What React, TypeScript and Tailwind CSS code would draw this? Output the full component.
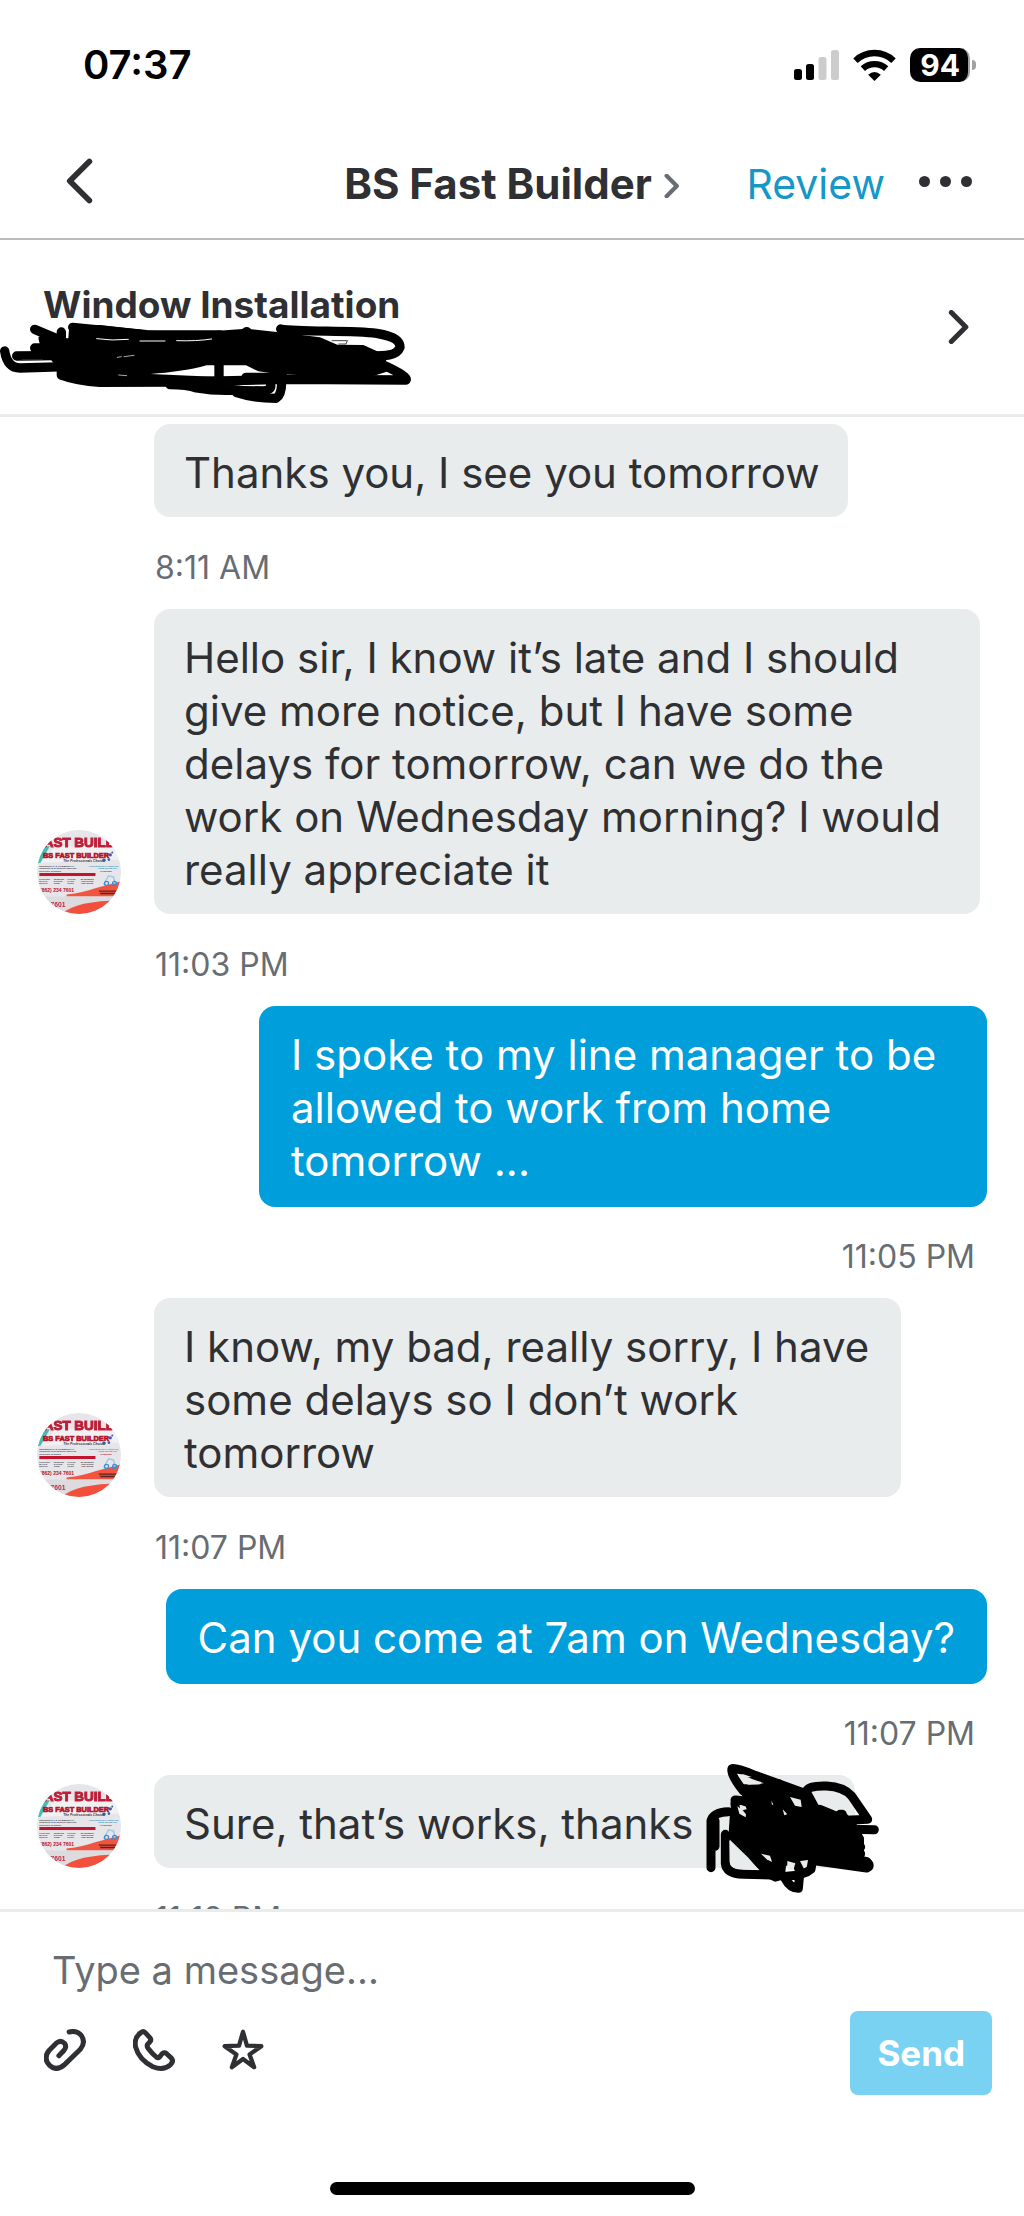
import { useState } from "react";
import { clsx } from "clsx";

interface Message {
  id: number;
  from: "pro" | "me";
  text: string;
  time: string;
  avatar?: boolean;
  redacted?: boolean;
  size?: string;
}

const messages: Message[] = [
  { id: 1, from: "pro", text: "Thanks you, I see you tomorrow", time: "8:11 AM", size: "min-w-[694px]" },
  {
    id: 2,
    from: "pro",
    text: "Hello sir, I know it’s late and I should give more notice, but I have some delays for tomorrow, can we do the work on Wednesday morning? I would really appreciate it",
    time: "11:03 PM",
    avatar: true,
    size: "max-w-[826px]",
  },
  {
    id: 3,
    from: "me",
    text: "I spoke to my line manager to be allowed to work from home tomorrow ...",
    time: "11:05 PM",
    size: "max-w-[728px]",
  },
  {
    id: 4,
    from: "pro",
    text: "I know, my bad, really sorry, I have some delays so I don’t work tomorrow",
    time: "11:07 PM",
    avatar: true,
    size: "max-w-[747px]",
  },
  { id: 5, from: "me", text: "Can you come at 7am on Wednesday?", time: "11:07 PM" },
  {
    id: 6,
    from: "pro",
    text: "Sure, that’s works, thanks",
    time: "11:12 PM",
    avatar: true,
    redacted: true,
    size: "min-w-[701px]",
  },
];

const SignalIcon = () => (
  <svg viewBox="0 0 45 30" className="w-[45px] h-[30px]" aria-hidden="true">
    <rect x="0" y="19" width="8" height="11" rx="2.5" />
    <rect x="12" y="14" width="8" height="16" rx="2.5" />
    <rect x="24.5" y="7" width="8" height="23" rx="2.5" fill="#cccccc" />
    <rect x="37" y="0" width="8" height="30" rx="2.5" fill="#cccccc" />
  </svg>
);

const WifiIcon = () => (
  <svg viewBox="0 0 128 96" className="w-[43px] h-[32px]" aria-hidden="true">
    <g fill="none" stroke="#000" strokeWidth="19">
      <path d="M7 35 A82 82 0 0 1 121 35" />
      <path d="M29 59 A52 52 0 0 1 99 59" />
    </g>
    <path d="M64 96 L45 77 Q64 61 83 77 Z" />
  </svg>
);

const BatteryIcon = () => (
  <span className="flex items-center gap-0.5">
    <span className="flex h-[34px] items-center rounded-[10px] border-r-2 border-neutral-400 bg-black pl-2.5 pr-2 text-[30px] font-bold leading-none text-white">
      94
    </span>
    <span className="h-2.5 w-1 rounded-r-full bg-neutral-400" />
  </span>
);

const Chevron = ({ className, flip }: { className: string; flip?: boolean }) => (
  <svg
    viewBox="0 0 24 40"
    className={className}
    fill="none"
    stroke="currentColor"
    strokeLinecap="round"
    strokeLinejoin="round"
    aria-hidden="true"
  >
    <path d={flip ? "M21 3 L4 20 L21 37" : "M3 3 L20 20 L3 37"} />
  </svg>
);

const ClipIcon = () => (
  <svg viewBox="45 58 127 127" className="size-[42px]" fill="none" stroke="currentColor" strokeWidth="15" strokeLinecap="round" strokeLinejoin="round" aria-hidden="true">
    <path d="M121 67 Q145 61 158 78 Q172 98 155 119 L108 165 Q83 188 62 168 Q41 147 61 122 L82 101 Q95 90 107 101 Q115 112 105 123 L90 139" />
  </svg>
);

const PhoneIcon = () => (
  <svg viewBox="312 58 127 127" className="size-[42px]" fill="none" stroke="currentColor" strokeWidth="15" strokeLinecap="round" strokeLinejoin="round" aria-hidden="true">
    <path d="M349 69 L363 84 Q369 91 362 98 L357 103 Q352 109 358 117 Q370 133 383 143 Q390 148 395 139 Q404 125 413 132 L428 146 Q436 155 425 166 Q405 185 372 172 Q330 151 320 113 Q314 84 336 69 Q343 63 349 69 Z" />
  </svg>
);

const StarIcon = () => (
  <svg viewBox="579 56 128 127" className="size-[42px]" fill="none" stroke="currentColor" strokeWidth="13" strokeLinejoin="round" aria-hidden="true">
    <path d="M643 64 L655 106 L699 108 L663 133 L677 172 L643 147 L609 172 L623 133 L587 108 L631 106 Z" />
  </svg>
);

const Avatar = () => (
  <svg viewBox="52 52 250 250" className="size-[84px] rounded-full" role="img" aria-label="BS Fast Builder">
    <defs>
      <filter id="soft">
        <feGaussianBlur stdDeviation="2" />
      </filter>
    </defs>
    <rect x="52" y="52" width="250" height="250" fill="#e6e6ea" />
    <path d="M52 150 L110 100 H300 V140 L180 145 Z" fill="#f1f1f3" />
    <path d="M52 100 H90 L62 150 H52 Z" fill="#45bdb4" />
    <g fontFamily="'Liberation Sans Narrow', 'Liberation Sans', sans-serif" fontWeight="700">
      <text x="72" y="103" fontSize="40" fill="#c01f38" stroke="#c01f38" strokeWidth="3" filter="url(#soft)">
        AST BUILD
      </text>
      <text x="70" y="134" fontSize="22" fill="#b5122b" stroke="#b5122b" strokeWidth="2">
        BS FAST BUILDER
      </text>
      <text x="130" y="148" fontSize="10" fontStyle="italic" fill="#333344">
        The Professionals Choice!
      </text>
      <g fontSize="7" fill="#3b3b44">
        <text x="59" y="161">RESIDENTIAL &amp; COMMERCIAL</text>
        <text x="59" y="169">INTERIOR &amp; EXTERIOR SERVICE</text>
        <text x="59" y="177">ROOFING &amp; SIDING</text>
        <text x="59" y="200">KITCHEN</text>
        <text x="59" y="207">BATHS</text>
        <text x="59" y="214">DECKS</text>
        <text x="102" y="200">WINDOW</text>
        <text x="102" y="207">DOORS</text>
        <text x="102" y="214">TRIM</text>
        <text x="142" y="200">FLOOR</text>
        <text x="142" y="207">PAINT</text>
        <text x="142" y="214">TILES</text>
        <text x="182" y="200">BASEMENT</text>
        <text x="182" y="207">ADDITIONS</text>
        <text x="182" y="214">AND MORE</text>
      </g>
      <g fontSize="7" fill="#2e8fbd">
        <text x="207" y="161">PROFESSIONAL SERVICE</text>
        <text x="234" y="169">FREE ESTIMATE</text>
      </g>
      <text x="240" y="177" fontSize="7" fill="#b5122b">LICENSED</text>
      <rect x="59" y="180" width="167" height="9" fill="#c3142d" />
      <path d="M140 244 Q190 238 225 225 L300 205 V250 H140 Z" fill="#f2553f" />
      <path d="M52 250 H302 V272 Q230 258 190 275 L160 302 H52 Z" fill="#dcdcdf" />
      <path d="M125 302 Q170 262 302 262 V302 Z" fill="#f2503d" />
      <text x="61" y="238" fontSize="15" fill="#b5122b">
        (862) 234 7601
      </text>
      <text x="92" y="282" fontSize="20" fill="#c4263d" filter="url(#soft)">
        7601
      </text>
      <path d="M236 234 H290 M240 241 H290" stroke="#5a2222" strokeWidth="4" />
    </g>
    <g fill="#2f5fa8">
      <circle cx="270" cy="126" r="5" />
      <circle cx="276" cy="119" r="3" />
      <circle cx="251" cy="142" r="5" />
      <circle cx="266" cy="140" r="4" />
    </g>
    <g fill="none" stroke="#3c8fd0" strokeWidth="4">
      <path d="M250 215 L265 188 L280 192 L284 212" stroke="#9cc4e4" />
      <circle cx="259" cy="211" r="6" />
      <circle cx="283" cy="211" r="6" />
    </g>
  </svg>
);

// Marker strokes hiding the street address
const AddressScribble = () => (
  <svg viewBox="0 156 1242 249" className="absolute left-0 top-[82px] w-[414px] h-[83px]" aria-hidden="true">
    <path d="M208 165 L300 165 L450 182 L600 186 L740 176 L850 188 L960 202 L1012 224 L1090 225 L1135 245 L1158 268 L1160 305 L1120 318 L1000 320 L830 312 L775 304 L738 286 L620 286 C570 300 510 308 452 312 L640 320 L900 325 L700 348 L300 345 L180 325 L172 295 L120 225 L115 200 L205 205 Z" />
    <g fill="none" stroke="#000" strokeWidth="28" strokeLinecap="round" strokeLinejoin="round">
      <path d="M14 243 Q22 294 60 294 L200 290" />
      <path d="M50 258 L220 256" />
      <path d="M104 178 L170 206 L230 240" />
      <path d="M104 234 H220" />
      <path d="M130 208 L170 240" />
      <path d="M184 186 V315 Q230 332 300 337 L520 336 L860 328 L1218 330 Q1226 320 1150 285" />
      <path d="M218 172 L440 194 L660 195" />
      <path d="M740 185 V200" />
      <path d="M842 177 C900 187 1050 180 1130 190 C1190 200 1200 215 1200 232 C1190 258 1155 258 1110 258" />
      <path d="M657 280 V350" />
      <path d="M510 344 Q560 344 590 354 Q640 363 700 361 L790 363 Q815 360 812 345" />
      <path d="M710 368 Q760 385 828 385 Q845 375 845 335" />
      <path d="M738 322 H850" />
    </g>
    <g fill="none" stroke="#fff" strokeWidth="3" strokeLinecap="round">
      <path d="M290 206 Q335 213 385 208" />
      <path d="M420 213 H495" />
      <path d="M530 212 Q590 214 635 207" />
      <path d="M352 262 L364 260 M372 260 L402 256" strokeWidth="2" />
      <path d="M356 315 L380 317" strokeWidth="2" />
      <path d="M66 269 H128" stroke="#444" strokeWidth="2" />
    </g>
    <path d="M995 212 H1042 L1038 222 H1015" fill="none" stroke="#444" strokeWidth="3" />
  </svg>
);

// Marker strokes hiding the customer's name
const NameScribble = () => (
  <svg viewBox="78 66 522 396" className="absolute left-[552px] -top-3 w-[174px] h-[132px]" aria-hidden="true">
    <path d="M150 215 L200 205 L175 130 L235 130 L300 115 L372 160 L395 205 L440 215 L500 218 L530 250 L552 290 L552 345 L520 358 L400 355 L345 362 L318 375 L314 415 L285 422 L255 408 L205 350 L145 292 Z" />
    <g fill="none" stroke="#000" strokeWidth="27" strokeLinecap="round" strokeLinejoin="round">
      <path d="M93 380 V240 Q100 213 145 212" />
      <path d="M105 316 V240" />
      <path d="M136 280 V368 Q140 399 190 400 L275 402" />
      <path d="M190 150 Q150 100 156 83 Q165 78 225 103 L370 155" />
      <path d="M165 185 Q163 215 190 245 M165 177 Q200 175 235 205" />
      <path d="M410 210 L380 155 Q378 133 440 135 Q490 137 515 165 L563 235 L500 238 L420 205" />
      <path d="M480 264 L583 266" />
      <path d="M410 360 L560 381 Q575 375 560 362 L470 340" />
      <path d="M315 412 Q330 441 355 442 L360 390 L345 360" />
      <path d="M320 406 Q375 402 393 385 L398 355" />
      <path d="M530 298 H537 M540 318 H542 M540 338 H542" />
      <path d="M480 220 H487" />
    </g>
    <g fill="#e8ecec">
      <path d="M172 196 L188 208 L198 220 L197 229 L178 218 Z" />
      <path d="M308 205 L322 220 L313 223 Z" />
      <path d="M330 168 L362 176 L365 198 L345 194 Z" />
      <path d="M188 122 L243 122 L241 130 L205 131 Z" />
      <path d="M172 100 L190 100 L215 108 L180 112 Z" />
      <path d="M243 338 L270 344 L276 363 L260 355 Z" />
      <path d="M322 360 L346 367 L340 388 L322 386 Z" />
      <path d="M274 180 L280 190 L276 192 Z" />
      <path d="M148 298 L205 356 L238 386 L185 384 Q150 384 149 362 Z" />
    </g>
  </svg>
);

const Bubble = ({ message }: { message: Message }) => {
  const mine = message.from === "me";
  return (
    <li className={clsx("flex flex-col", mine && "items-end")}>
      <div className="flex items-end gap-[33px]">
        {!mine && <div className="size-[84px] shrink-0">{message.avatar && <Avatar />}</div>}
        <div
          className={clsx(
            "relative rounded-2xl text-[42px] leading-[53px]",
            mine
              ? "bg-[#009fdb] px-8 pb-5 pt-[22px] text-white"
              : "bg-[#e8ecec] pb-[18px] pl-[30px] pr-5 pt-[22px] text-[#2f3033]",
            message.size
          )}
        >
          {message.text}
          {message.redacted && <NameScribble />}
        </div>
      </div>
      <time
        className={clsx(
          "mb-[21px] text-[32px] leading-[40px] text-[#676d73]",
          mine ? "mr-3 mt-[30px]" : "ml-[118px] mt-[31px]"
        )}
      >
        {message.time}
      </time>
    </li>
  );
};

export default function App() {
  const [draft, setDraft] = useState("");

  return (
    <div className="flex h-screen flex-col overflow-hidden bg-white font-['Inter',sans-serif] text-[#2f3033]">
      <div className="flex items-center justify-between py-[45px] pl-[83px] pr-12 text-black">
        <span className="text-[40px] font-semibold leading-[40px]">07:37</span>
        <div className="flex items-center gap-3.5">
          <SignalIcon />
          <WifiIcon />
          <BatteryIcon />
        </div>
      </div>

      <header className="grid grid-cols-[1fr_auto_1fr] items-center border-b-2 border-[#b9bcbe] px-[52px] py-[26px]">
        <button type="button" aria-label="Back" className="ml-3 justify-self-start pb-1.5">
          <Chevron flip className="h-[46px] w-[30px] stroke-[5]" />
        </button>
        <h1>
          <a href="#profile" className="flex items-center gap-3 text-[42px] font-bold leading-[56px]">
            BS Fast Builder
            <Chevron className="mt-1 h-[24px] w-[16px] text-[#676d73] stroke-[7]" />
          </a>
        </h1>
        <div className="flex items-center gap-[34px] justify-self-end">
          <a href="#review" className="text-[41px] leading-[56px] text-[#1597c8]">
            Review
          </a>
          <button type="button" aria-label="More options" className="flex gap-2.5 pb-1.5">
            <span className="size-[11px] rounded-full bg-[#2f3033]" />
            <span className="size-[11px] rounded-full bg-[#2f3033]" />
            <span className="size-[11px] rounded-full bg-[#2f3033]" />
          </button>
        </div>
      </header>

      <a
        href="#job"
        className="relative flex items-center justify-between border-b-3 border-[#e9eced] py-[43px] pl-[43px] pr-[54px]"
      >
        <h2 className="pb-11 text-[37px] font-bold leading-[44px]">Window Installation</h2>
        <Chevron className="h-[34px] w-[22px] stroke-[6]" />
        <AddressScribble />
      </a>

      <ul className="min-h-0 flex-1 overflow-hidden px-[37px] pt-[7px]">
        {messages.map((message) => (
          <Bubble key={message.id} message={message} />
        ))}
      </ul>

      <form
        className="border-t-3 border-[#e9eced] pl-11 pr-8 pt-[30px]"
        onSubmit={(e) => {
          e.preventDefault();
          setDraft("");
        }}
      >
        <input
          type="text"
          aria-label="Message"
          placeholder="Type a message..."
          value={draft}
          onChange={(e) => setDraft(e.target.value)}
          className="block h-[56px] w-full px-2 text-[38px] outline-none placeholder:text-[#676d73]"
        />
        <div className="mt-[13px] flex items-center justify-between">
          <div className="flex gap-[47px] pb-1.5">
            <button type="button" aria-label="Attach file">
              <ClipIcon />
            </button>
            <button type="button" aria-label="Call">
              <PhoneIcon />
            </button>
            <button type="button" aria-label="Saved replies">
              <StarIcon />
            </button>
          </div>
          <button
            type="submit"
            className="h-[84px] rounded-lg bg-[#7ad2f3] px-[27px] text-[35px] font-bold text-white"
          >
            Send
          </button>
        </div>
      </form>
      <div className="mx-auto mb-[21px] mt-[87px] h-[13px] w-[365px] shrink-0 rounded-full bg-black" />
    </div>
  );
}
